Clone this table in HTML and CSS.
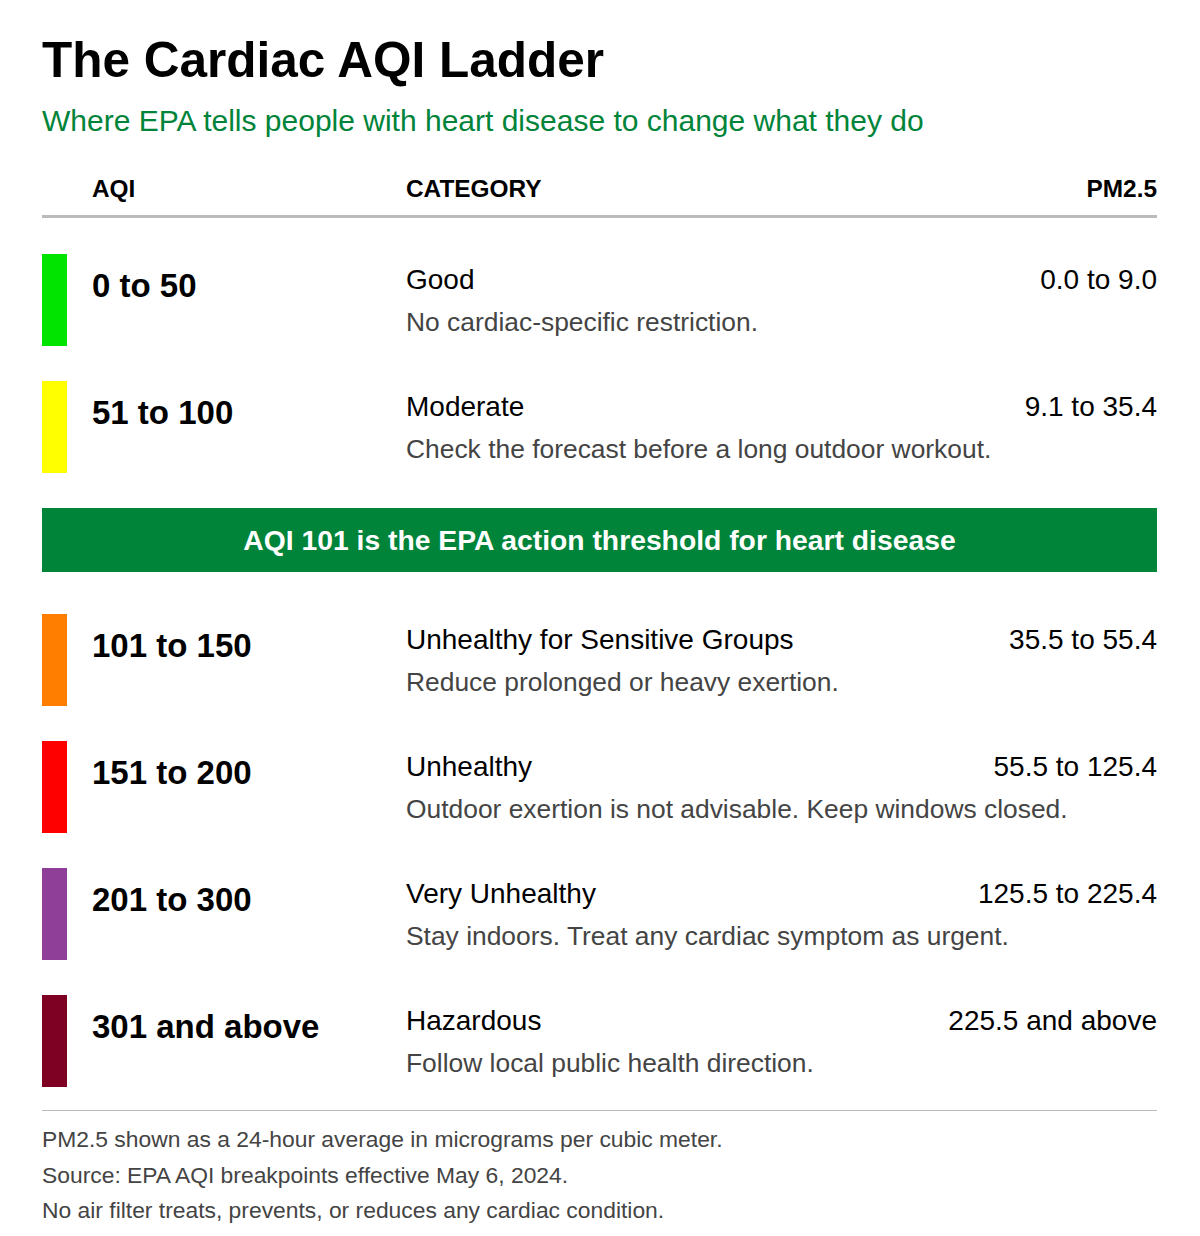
FILE: index.html
```html
<!DOCTYPE html>
<html lang="en">
<head>
<meta charset="utf-8">
<title>The Cardiac AQI Ladder</title>
<link rel="stylesheet" href="styles.css">
</head>
<body>
<main class="page">
  <h1 class="title">The Cardiac AQI Ladder</h1>
  <p class="subtitle">Where EPA tells people with heart disease to change what they do</p>

  <div class="head">
    <span class="head-spacer"></span>
    <span class="head-aqi">AQI</span>
    <span class="head-cat">CATEGORY</span>
    <span class="head-pm">PM2.5</span>
  </div>

  <div class="ladder">
    <div class="row">
      <span class="bar bar-good"></span>
      <div class="range">0 to 50</div>
      <div class="cat">
        <div class="cat-top"><span class="cat-name">Good</span><span class="pm">0.0 to 9.0</span></div>
        <div class="cat-desc">No cardiac-specific restriction.</div>
      </div>
    </div>
    <div class="row">
      <span class="bar bar-moderate"></span>
      <div class="range">51 to 100</div>
      <div class="cat">
        <div class="cat-top"><span class="cat-name">Moderate</span><span class="pm">9.1 to 35.4</span></div>
        <div class="cat-desc">Check the forecast before a long outdoor workout.</div>
      </div>
    </div>
    <div class="banner">AQI 101 is the EPA action threshold for heart disease</div>
    <div class="row">
      <span class="bar bar-usg"></span>
      <div class="range">101 to 150</div>
      <div class="cat">
        <div class="cat-top"><span class="cat-name">Unhealthy for Sensitive Groups</span><span class="pm">35.5 to 55.4</span></div>
        <div class="cat-desc">Reduce prolonged or heavy exertion.</div>
      </div>
    </div>
    <div class="row">
      <span class="bar bar-unhealthy"></span>
      <div class="range">151 to 200</div>
      <div class="cat">
        <div class="cat-top"><span class="cat-name">Unhealthy</span><span class="pm">55.5 to 125.4</span></div>
        <div class="cat-desc">Outdoor exertion is not advisable. Keep windows closed.</div>
      </div>
    </div>
    <div class="row">
      <span class="bar bar-very"></span>
      <div class="range">201 to 300</div>
      <div class="cat">
        <div class="cat-top"><span class="cat-name">Very Unhealthy</span><span class="pm">125.5 to 225.4</span></div>
        <div class="cat-desc">Stay indoors. Treat any cardiac symptom as urgent.</div>
      </div>
    </div>
    <div class="row">
      <span class="bar bar-hazard"></span>
      <div class="range">301 and above</div>
      <div class="cat">
        <div class="cat-top"><span class="cat-name">Hazardous</span><span class="pm">225.5 and above</span></div>
        <div class="cat-desc">Follow local public health direction.</div>
      </div>
    </div>
  </div>

  <footer class="notes">
    <p>PM2.5 shown as a 24-hour average in micrograms per cubic meter.</p>
    <p>Source: EPA AQI breakpoints effective May 6, 2024.</p>
    <p>No air filter treats, prevents, or reduces any cardiac condition.</p>
  </footer>
</main>
</body>
</html>
```

FILE: styles.css
```css
* { box-sizing: border-box; }

body {
  margin: 0;
  background: #ffffff;
  font-family: "Liberation Sans", Arial, sans-serif;
  color: #000000;
}

.page {
  width: 1200px;
  padding: 32px 43px 0 42px;
}

.title {
  margin: 0;
  font-size: 49.5px;
  line-height: 56px;
  font-weight: 700;
}

.subtitle {
  margin: 15px 0 0;
  font-size: 30px;
  line-height: 36px;
  color: #00843a;
}

.head {
  display: grid;
  grid-template-columns: 50px 314px 1fr auto;
  margin-top: 36px;
  padding-bottom: 12px;
  border-bottom: 3px solid #bbbbbb;
  font-size: 24.4px;
  line-height: 28px;
  font-weight: 700;
}

.head-pm { text-align: right; }

.ladder {
  margin-top: 36px;
  display: flex;
  flex-direction: column;
  gap: 35px;
}

.row {
  display: grid;
  grid-template-columns: 50px 314px 1fr;
}

.bar {
  display: block;
  width: 25px;
  height: 92px;
}

.bar-good { background: #00e400; }
.bar-moderate { background: #ffff00; }
.bar-usg { background: #ff7e00; }
.bar-unhealthy { background: #ff0000; }
.bar-very { background: #8f3f97; }
.bar-hazard { background: #7e0023; }

.range {
  padding-top: 13px;
  font-size: 33px;
  line-height: 38px;
  font-weight: 700;
  white-space: nowrap;
}

.cat { padding-top: 9px; }

.cat-top {
  display: flex;
  justify-content: space-between;
  align-items: baseline;
  font-size: 28px;
  line-height: 34px;
}

.pm { white-space: nowrap; }

.cat-desc {
  margin-top: 9px;
  font-size: 26.4px;
  line-height: 32px;
  color: #444444;
  white-space: nowrap;
}

.banner {
  height: 64px;
  margin-bottom: 7px;
  background: #00843a;
  color: #ffffff;
  font-size: 28.3px;
  line-height: 64px;
  font-weight: 700;
  text-align: center;
}

.notes {
  margin-top: 23px;
  padding-top: 11px;
  border-top: 1px solid #bbbbbb;
  font-size: 22.85px;
  line-height: 35.5px;
  color: #444444;
}

.notes p { margin: 0; }
```
